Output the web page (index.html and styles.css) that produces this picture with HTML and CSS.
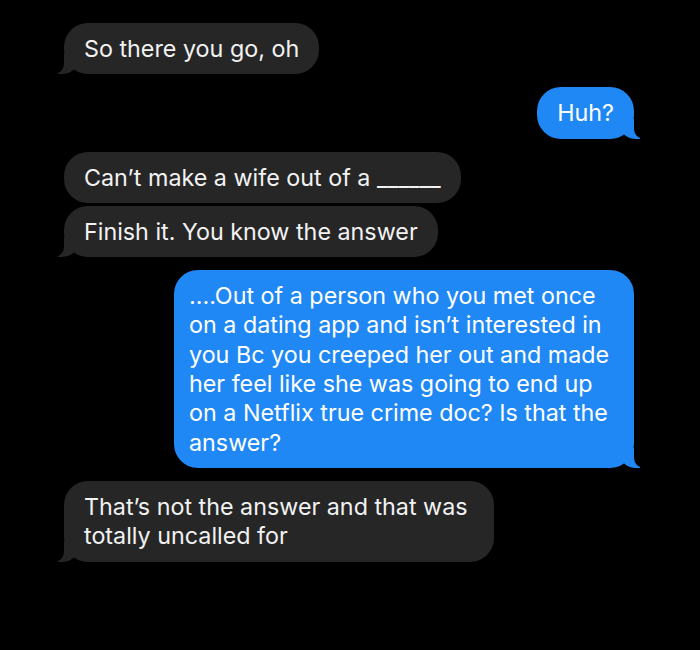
FILE: index.html
```html
<!DOCTYPE html>
<html lang="en">
<head>
    <meta charset="UTF-8">
    <meta name="viewport" content="width=device-width, initial-scale=1.0">
    <title>Messages</title>
    <link rel="stylesheet" href="styles.css">
</head>
<body>

<div id="thread">
    <div class="msg them tail">So there you go, oh</div>
    <div class="msg me tail gap">Huh?</div>
    <div class="msg them gap">Can&rsquo;t make a wife out of a ______</div>
    <div class="msg them tail">Finish it. You know the answer</div>
    <div class="msg me tail gap wide">....Out of a person who you met once on a dating app and isn&rsquo;t interested in you Bc you creeped her out and made her feel like she was going to end up on a Netflix true crime doc? Is that the answer?</div>
    <div class="msg them tail gap">That&rsquo;s not the answer and that was totally uncalled for</div>
</div>

</body>
</html>
```

FILE: styles.css
```css
body {
    margin: 0;
    background-color: #000;
    font-family: Inter, "Liberation Sans", Arial, sans-serif;
    color: #f2f2f2;
    width: 700px;
    height: 650px;
    overflow: hidden;
}

#thread {
    display: flex;
    flex-direction: column;
    padding: 23px 66px 0 64px;
    gap: 3px;
}

.msg {
    position: relative;
    max-width: 390px;
    padding: 11px 20px 11px 20px;
    font-size: 23.3px;
    line-height: 29.3px;
    border-radius: 24px;
}

.msg.gap {
    margin-top: 10px;
}

.them {
    align-self: flex-start;
    background-color: #262627;
}

.me {
    align-self: flex-end;
    background-color: #1f88f5;
    color: #fff;
}

.wide {
    max-width: 430px;
    padding-left: 15px;
    padding-right: 15px;
}

/* bubble tails */
.tail::before,
.tail::after {
    content: "";
    position: absolute;
    bottom: 0;
    height: 20px;
}

.them.tail::before {
    left: -6px;
    width: 20px;
    background-color: #262627;
    border-bottom-right-radius: 16px 14px;
}

.them.tail::after {
    left: -24px;
    width: 24px;
    background-color: #000;
    border-bottom-right-radius: 10px;
}

.me.tail::before {
    right: -6px;
    width: 20px;
    background-color: #1f88f5;
    border-bottom-left-radius: 16px 14px;
}

.me.tail::after {
    right: -24px;
    width: 24px;
    background-color: #000;
    border-bottom-left-radius: 10px;
}
```
